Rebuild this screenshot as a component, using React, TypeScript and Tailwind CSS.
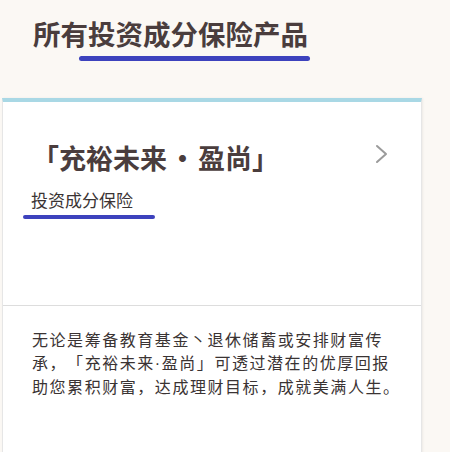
import React from "react";

export default function App() {
  return (
    <div
      className="w-[450px] h-[452px] overflow-hidden bg-[#fbf8f4] [text-spacing-trim:space-all]"
      style={{ fontFamily: '"Noto Sans CJK SC", "Noto Sans", sans-serif' }}
    >
      <div className="pt-[15px]">
        <div className="pl-[33px] text-[27.5px] leading-[36px] font-bold text-[#4a3d3d]">
          所有投资成分保险产品
        </div>
        <div className="ml-[79px] mt-[5px] h-[5px] w-[231px] rounded-full bg-[#3d42bd]" />
      </div>

      <div className="ml-[2px] mt-[37px] w-[420px] border-t-4 border-t-[#a9d8e5] border-x border-x-[#e6e6e6] bg-white shadow-[1px_0_2px_rgba(0,0,0,0.06)]">
        <div className="h-[204px] border-b border-b-[#dddddd] pt-[38px]">
          <div className="flex items-start justify-between pl-[29px] pr-[32px]">
            <div className="text-[27px] leading-[36px] font-bold text-[#4a3d3d]">
              「充裕未来<span className="inline-block w-[31px] text-center">·</span>盈尚」
            </div>
            <svg
              width="14"
              height="20"
              viewBox="0 0 14 20"
              className="mt-[4px]"
              fill="none"
            >
              <polyline
                points="2,2 11,10 2,18"
                stroke="#9b9b9b"
                strokeWidth="2"
                strokeLinecap="round"
                strokeLinejoin="round"
              />
            </svg>
          </div>
          <div className="mt-[12px] pl-[28px] text-[17px] leading-[24px] text-[#3a3333]">
            投资成分保险
          </div>
          <div className="ml-[20px] mt-[3px] h-[4px] w-[132px] rounded-full bg-[#3d42bd]" />
        </div>
        <div className="h-[160px] pl-[29px] pr-[18px] pt-[22px] text-[16px] leading-[22.5px] tracking-[1.55px] text-[#3a3333]">
          无论是筹备教育基金丶退休储蓄或安排财富传承，「充裕未来
          <span style={{ fontFamily: '"Liberation Sans", sans-serif' }}>·</span>
          盈尚」可透过潜在的优厚回报助您累积财富，达成理财目标，成就美满人生。
        </div>
      </div>
    </div>
  );
}
